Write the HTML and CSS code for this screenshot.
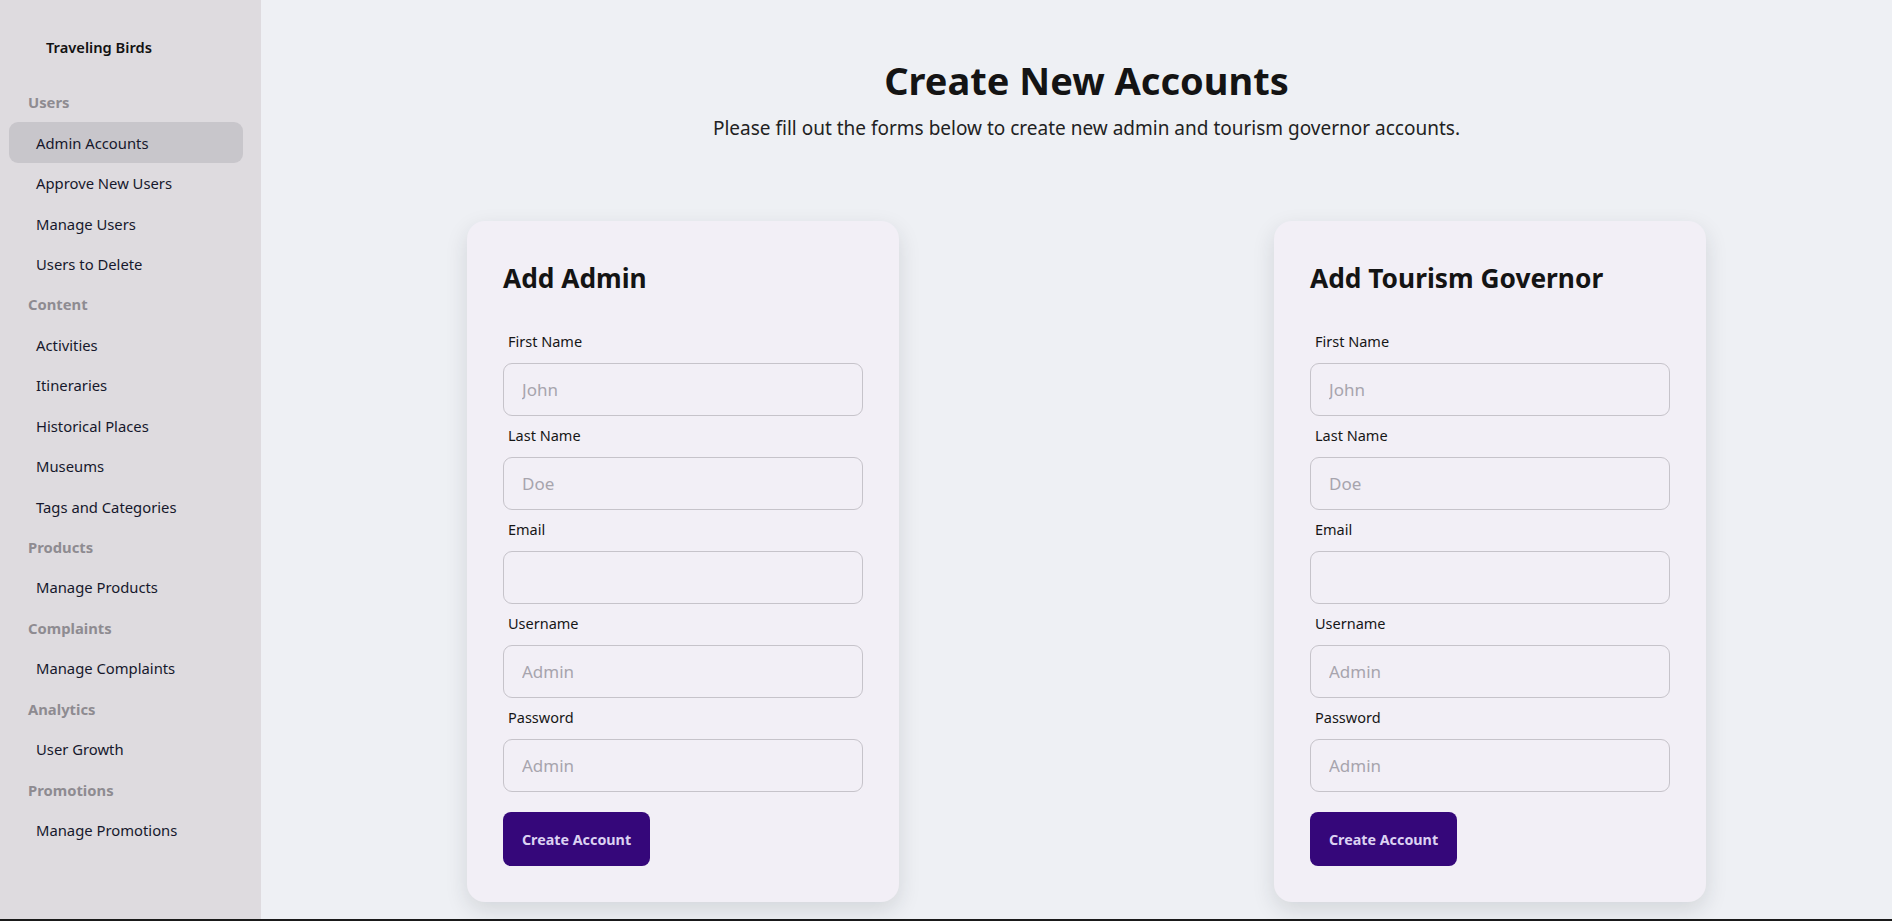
FILE: index.html
```html
<!DOCTYPE html>
<html lang="en">
<head>
<meta charset="utf-8">
<title>Create New Accounts</title>
<link rel="stylesheet" href="styles.css">
</head>
<body>
<div class="app">
  <aside class="sidebar">
    <div class="brand">Traveling Birds</div>
    <nav class="nav">
      <div class="nav-section">Users</div>
      <a class="nav-item active">Admin Accounts</a>
      <a class="nav-item">Approve New Users</a>
      <a class="nav-item">Manage Users</a>
      <a class="nav-item">Users to Delete</a>
      <div class="nav-section">Content</div>
      <a class="nav-item">Activities</a>
      <a class="nav-item">Itineraries</a>
      <a class="nav-item">Historical Places</a>
      <a class="nav-item">Museums</a>
      <a class="nav-item">Tags and Categories</a>
      <div class="nav-section">Products</div>
      <a class="nav-item">Manage Products</a>
      <div class="nav-section">Complaints</div>
      <a class="nav-item">Manage Complaints</a>
      <div class="nav-section">Analytics</div>
      <a class="nav-item">User Growth</a>
      <div class="nav-section">Promotions</div>
      <a class="nav-item">Manage Promotions</a>
    </nav>
  </aside>
  <main class="main">
    <header class="page-head">
      <h1 class="page-title">Create New Accounts</h1>
      <p class="page-sub">Please fill out the forms below to create new admin and tourism governor accounts.</p>
    </header>
    <div class="cards">
      <form class="card">
        <h2 class="card-title">Add Admin</h2>
        <div class="field"><label class="label">First Name</label><input class="input" placeholder="John"></div>
        <div class="field"><label class="label">Last Name</label><input class="input" placeholder="Doe"></div>
        <div class="field"><label class="label">Email</label><input class="input" placeholder=""></div>
        <div class="field"><label class="label">Username</label><input class="input" placeholder="Admin"></div>
        <div class="field"><label class="label">Password</label><input class="input" placeholder="Admin"></div>
        <button type="button" class="btn">Create Account</button>
      </form>
      <form class="card">
        <h2 class="card-title">Add Tourism Governor</h2>
        <div class="field"><label class="label">First Name</label><input class="input" placeholder="John"></div>
        <div class="field"><label class="label">Last Name</label><input class="input" placeholder="Doe"></div>
        <div class="field"><label class="label">Email</label><input class="input" placeholder=""></div>
        <div class="field"><label class="label">Username</label><input class="input" placeholder="Admin"></div>
        <div class="field"><label class="label">Password</label><input class="input" placeholder="Admin"></div>
        <button type="button" class="btn">Create Account</button>
      </form>
    </div>
  </main>
</div>
<div class="bottom-rule"></div>
</body>
</html>
```

FILE: styles.css
```css
* { box-sizing: border-box; }
html, body { margin: 0; padding: 0; }
body {
  font-family: "Noto Sans", "Open Sans", sans-serif;
  background: #eef0f4;
  color: #161616;
  overflow: hidden;
}
.app {
  display: flex;
  height: 919px;
}
.bottom-rule {
  height: 2px;
  background: #1a1a1a;
}
.sidebar {
  width: 261px;
  flex: 0 0 261px;
  background: #dedbdf;
  padding: 0 18px 0 9px;
}
.brand {
  font-size: 14.7px;
  font-weight: 600;
  color: #121212;
  padding-left: 37px;
  padding-top: 37px;
  line-height: 20px;
}
.nav {
  display: flex;
  flex-direction: column;
  margin-top: 25px;
}
.nav-section,
.nav-item {
  height: 40.45px;
  display: flex;
  align-items: center;
  font-size: 14.8px;
}
.nav-section {
  padding-left: 19px;
  font-weight: 700;
  color: #8e8b91;
}
.nav-item {
  padding-left: 27px;
  color: #16182c;
  border-radius: 9px;
}
.nav-item.active {
  background: #c8c6cb;
}
.main {
  flex: 1;
  padding-left: 20px;
  display: flex;
  flex-direction: column;
}
.page-head {
  text-align: center;
  padding-top: 53px;
}
.page-title {
  margin: 0;
  font-size: 38px;
  line-height: 54px;
  font-weight: 700;
  color: #141414;
}
.page-sub {
  margin: 7px 0 0;
  font-size: 19px;
  line-height: 28px;
  color: #222;
}
.cards {
  display: flex;
  justify-content: center;
  gap: 375px;
  margin-top: 79px;
}
.card {
  width: 432px;
  background: #f2eff6;
  border-radius: 18px;
  padding: 40px 36px 36px 36px;
  box-shadow: 0 8px 22px rgba(30, 35, 50, 0.13);
  display: flex;
  flex-direction: column;
}
.card-title {
  margin: 0 0 36px;
  font-size: 26.3px;
  line-height: 34px;
  font-weight: 700;
  color: #141414;
}
.field {
  display: flex;
  flex-direction: column;
  margin-bottom: 12px;
}
.label {
  font-size: 14.5px;
  line-height: 20px;
  color: #161616;
  padding-left: 5px;
  margin-bottom: 12px;
}
.field + .field .label {
  margin-bottom: 12px;
}
.field {
  margin-bottom: 9px;
}
.input {
  height: 53px;
  width: 100%;
  border: 1px solid #c6c3ca;
  border-radius: 9px;
  background: #f2eff6;
  padding: 0 18px;
  font-family: inherit;
  font-size: 17px;
  color: #222;
}
.input::placeholder {
  color: #a7a4ad;
}
.btn {
  margin-top: 11px;
  align-self: flex-start;
  width: 147px;
  height: 54px;
  border: none;
  border-radius: 8px;
  background: #35077a;
  color: #dcd2f2;
  font-family: inherit;
  font-size: 14.3px;
  font-weight: 700;
}
```
